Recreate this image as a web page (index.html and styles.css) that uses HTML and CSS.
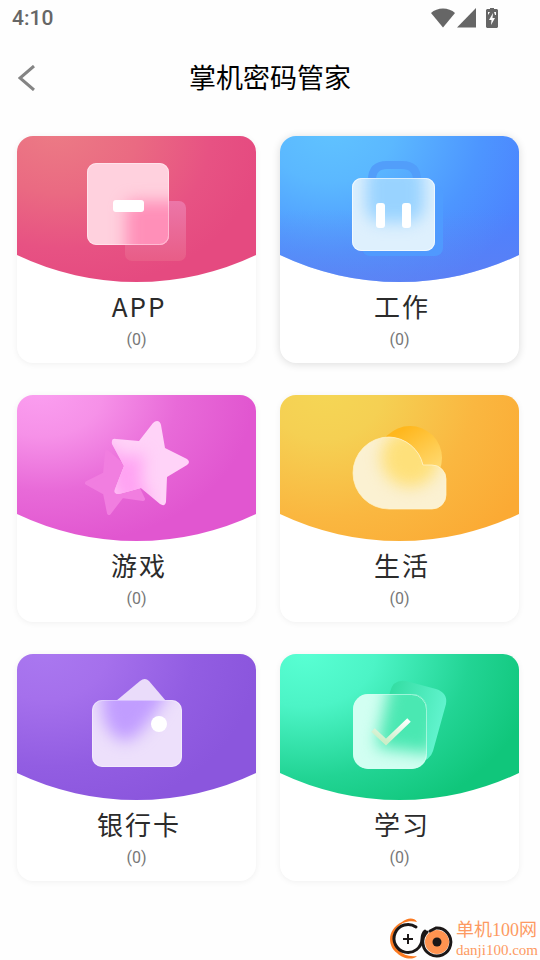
FILE: index.html
```html
<!DOCTYPE html>
<html lang="zh-CN">
<head>
    <meta charset="UTF-8">
    <meta name="viewport" content="width=device-width, initial-scale=1.0">
    <title>掌机密码管家</title>
    <link rel="stylesheet" href="styles.css">
</head>
<body>

    <!-- Status bar -->
    <div class="status-bar">
        <span class="time">4:10</span>
        <div class="status-icons">
            <svg class="icon-wifi" viewBox="0 0 24 20" aria-hidden="true">
                <path d="M0 5C6-1 18-1 24 5L12 19.500z"/>
            </svg>
            <svg class="icon-signal" viewBox="0 0 19 20" aria-hidden="true">
                <path d="M19 0v19.500H0z"/>
            </svg>
            <svg class="icon-battery" viewBox="0 0 12 20" aria-hidden="true">
                <path fill-rule="evenodd" d="M4 0h4v1h3l1 1v17l-1 1H1l-1-1V2l1-1h3zM7 5l-4 7h2.500L5 17l4-7H6.500zM2 4v3l2-3zM8 4h2v3H9z"/>
            </svg>
        </div>
    </div>

    <header class="header">
        <button class="back" type="button" aria-label="返回">
            <svg viewBox="0 0 18 26" aria-hidden="true"><path d="M16 1L2 13l14 12"/></svg>
        </button>
        <h1>掌机密码管家</h1>
    </header>

    <main class="card-grid">
        <a class="card" href="#app">
            <svg class="cover" viewBox="0 0 239 147" aria-hidden="true">
                <defs>
                    <radialGradient id="appBg" gradientUnits="userSpaceOnUse" cx="35" cy="-15" r="210" gradientTransform="rotate(8) scale(1 .75)">
                        <stop offset="0" stop-color="#ec7b85"/>
                        <stop offset=".4" stop-color="#ea6a82"/>
                        <stop offset=".75" stop-color="#e75283"/>
                        <stop offset="1" stop-color="#e54a80"/>
                    </radialGradient>
                    <linearGradient id="appBack" x1="0" y1="0" x2="0" y2="1">
                        <stop offset="0" stop-color="#ec76a8"/>
                        <stop offset="1" stop-color="#e85d87"/>
                    </linearGradient>
                    <clipPath id="appClip"><rect x="70" y="27" width="82" height="82" rx="9"/></clipPath>
                    <filter id="blur" x="-50%" y="-50%" width="200%" height="200%" color-interpolation-filters="sRGB"><feGaussianBlur stdDeviation="8"/></filter>
                </defs>
                <path fill="url(#appBg)" d="M0 0h239v119a278 278 0 0 1-239 0z"/>
                <rect x="108" y="65" width="61" height="60" rx="7" fill="url(#appBack)"/>
                <g clip-path="url(#appClip)">
                    <rect x="70" y="27" width="82" height="82" fill="#ffd1de"/>
                    <rect x="109" y="65" width="65" height="64" rx="7" fill="#ff8fb8" filter="url(#blur)"/>
                </g>
                <rect x="70.500" y="27.500" width="81" height="81" rx="9" fill="none" stroke="#fff" stroke-opacity=".4"/>
                <rect x="96" y="64" width="31" height="12" rx="3" fill="#fff"/>
            </svg>
            <span class="name">APP</span>
            <span class="count">(0)</span>
        </a>

        <a class="card card-active" href="#work">
            <svg class="cover" viewBox="0 0 239 147" aria-hidden="true">
                <defs>
                    <radialGradient id="workBg" gradientUnits="userSpaceOnUse" cx="50" cy="-10" r="215" gradientTransform="scale(1 .85)">
                        <stop offset="0" stop-color="#60c3ff"/>
                        <stop offset=".3" stop-color="#5bb8ff"/>
                        <stop offset=".7" stop-color="#4d96ff"/>
                        <stop offset="1" stop-color="#4c82fe"/>
                    </radialGradient>
                    <linearGradient id="workShade" x1="0" y1="0" x2="0" y2="1">
                        <stop offset=".5" stop-color="#6a7ceb" stop-opacity="0"/>
                        <stop offset="1" stop-color="#6a7ceb" stop-opacity=".5"/>
                    </linearGradient>
                    <clipPath id="workClip"><rect x="72" y="42" width="83" height="73" rx="9"/></clipPath>
                </defs>
                <path fill="url(#workBg)" d="M0 0h239v119a278 278 0 0 1-239 0z"/>
                <path fill="url(#workShade)" d="M0 0h239v119a278 278 0 0 1-239 0z"/>
                <path d="M92 50V44q0-15 15-15h15q15 0 15 15v6" fill="none" stroke="#529efa" stroke-width="8"/>
                <rect x="82" y="50" width="81" height="70" rx="8" fill="#4f9dff" fill-opacity=".8"/>
                <g clip-path="url(#workClip)">
                    <rect x="72" y="42" width="83" height="73" fill="#def0fd"/>
                    <rect x="86" y="28" width="58" height="58" rx="16" fill="#99d3ff" filter="url(#blur)"/>
                </g>
                <rect x="72.500" y="42.500" width="82" height="72" rx="9" fill="none" stroke="#fff" stroke-opacity=".6"/>
                <rect x="96" y="67" width="9" height="25" rx="3" fill="#fff"/>
                <rect x="122" y="67" width="9" height="25" rx="3" fill="#fff"/>
            </svg>
            <span class="name">工作</span>
            <span class="count">(0)</span>
        </a>

        <a class="card" href="#game">
            <svg class="cover" viewBox="0 0 239 147" aria-hidden="true">
                <defs>
                    <radialGradient id="gameBg" gradientUnits="userSpaceOnUse" cx="20" cy="-10" r="215" gradientTransform="rotate(6) scale(1 .72)">
                        <stop offset="0" stop-color="#fb9ff0"/>
                        <stop offset=".3" stop-color="#f691e8"/>
                        <stop offset=".65" stop-color="#e86ad8"/>
                        <stop offset="1" stop-color="#e156d0"/>
                    </radialGradient>
                    <clipPath id="gameClip"><path d="M140 26q3 0 4 4l4 23 22 11q4 3 0 6l-20 12-1 25q-1 5-6 2L124 93l-22 6q-6 0-4-5l9-23-12-22q-1-6 4-5l23 2 14-18q2-2 4-2z"/></clipPath>
                </defs>
                <path fill="url(#gameBg)" d="M0 0h239v119a278 278 0 0 1-239 0z"/>
                <g fill="#f17ee0" stroke="#f17ee0" stroke-width="4" stroke-linejoin="round">
                    <path d="M90 57l15 13 15-4-2 21 8 17-21-3-13 17-4-20-18-10 18-9z"/>
                </g>
                <g clip-path="url(#gameClip)">
                    <rect x="90" y="20" width="86" height="95" fill="#ffd3f8"/>
                    <path d="M90 57l15 13 15-4-2 21 8 17-21-3z" fill="#ffa2f2" stroke="#ffa2f2" stroke-width="12" filter="url(#blur)"/>
                </g>
            </svg>
            <span class="name">游戏</span>
            <span class="count">(0)</span>
        </a>

        <a class="card" href="#life">
            <svg class="cover" viewBox="0 0 239 147" aria-hidden="true">
                <defs>
                    <radialGradient id="lifeBg" gradientUnits="userSpaceOnUse" cx="45" cy="-5" r="230" gradientTransform="scale(1 .85)">
                        <stop offset="0" stop-color="#f5d655"/>
                        <stop offset=".25" stop-color="#f5d053"/>
                        <stop offset=".65" stop-color="#fab740"/>
                        <stop offset="1" stop-color="#fbaa34"/>
                    </radialGradient>
                    <linearGradient id="lifeSun" x1=".3" y1=".1" x2=".8" y2=".9">
                        <stop offset="0" stop-color="#ffb71d"/>
                        <stop offset="1" stop-color="#ffdf7e"/>
                    </linearGradient>
                    <clipPath id="lifeClip"><path d="M109 42a36 36 0 0 1 34 28h9a14 14 0 0 1 14 14v16a14 14 0 0 1-14 14h-43a36 36 0 0 1 0-72z"/></clipPath>
                </defs>
                <path fill="url(#lifeBg)" d="M0 0h239v119a278 278 0 0 1-239 0z"/>
                <circle cx="130" cy="63" r="32" fill="url(#lifeSun)"/>
                <g clip-path="url(#lifeClip)">
                    <rect x="72" y="40" width="96" height="76" fill="#fbf1d2"/>
                    <circle cx="130" cy="63" r="29" fill="#fee07a" filter="url(#blur)"/>
                </g>
                <path d="M109 42a36 36 0 0 1 34 28h9a14 14 0 0 1 14 14v16a14 14 0 0 1-14 14h-43a36 36 0 0 1 0-72z" fill="none" stroke="#fff5cf" stroke-opacity=".7"/>
            </svg>
            <span class="name">生活</span>
            <span class="count">(0)</span>
        </a>

        <a class="card" href="#bank">
            <svg class="cover" viewBox="0 0 239 147" aria-hidden="true">
                <defs>
                    <radialGradient id="bankBg" gradientUnits="userSpaceOnUse" cx="25" cy="-10" r="215" gradientTransform="rotate(6) scale(1 .78)">
                        <stop offset="0" stop-color="#aa78f0"/>
                        <stop offset=".3" stop-color="#a570ec"/>
                        <stop offset=".7" stop-color="#925de2"/>
                        <stop offset="1" stop-color="#8b56dd"/>
                    </radialGradient>
                    <clipPath id="bankClip"><rect x="75" y="46" width="90" height="67" rx="10"/></clipPath>
                </defs>
                <path fill="url(#bankBg)" d="M0 0h239v119a278 278 0 0 1-239 0z"/>
                <path d="M99 47l24-20q5-4 9 0l17 20z" fill="#eadcfa"/>
                <g clip-path="url(#bankClip)">
                    <rect x="75" y="46" width="90" height="67" fill="#ede0fb"/>
                    <path d="M84 30h70l-12 24-20 26-14 8-14-8-8-16z" fill="#c19dff" filter="url(#blur)"/>
                </g>
                <rect x="75.500" y="46.500" width="89" height="66" rx="10" fill="none" stroke="#fff" stroke-opacity=".35"/>
                <circle cx="142" cy="70" r="8" fill="#fff"/>
            </svg>
            <span class="name">银行卡</span>
            <span class="count">(0)</span>
        </a>

        <a class="card" href="#study">
            <svg class="cover" viewBox="0 0 239 147" aria-hidden="true">
                <defs>
                    <radialGradient id="studyBg" gradientUnits="userSpaceOnUse" cx="25" cy="0" r="235" gradientTransform="scale(1 .75)">
                        <stop offset="0" stop-color="#58ffd3"/>
                        <stop offset=".3" stop-color="#4cf4c6"/>
                        <stop offset=".7" stop-color="#22d494"/>
                        <stop offset="1" stop-color="#10c67b"/>
                    </radialGradient>
                    <linearGradient id="studyBack" x1="0" y1=".3" x2="1" y2=".6">
                        <stop offset="0" stop-color="#2bd99b"/>
                        <stop offset="1" stop-color="#66f6d2"/>
                    </linearGradient>
                    <linearGradient id="studyCheck" x1="1" y1="0" x2=".4" y2="1">
                        <stop offset="0" stop-color="#fff"/>
                        <stop offset="1" stop-color="#cdeec8"/>
                    </linearGradient>
                    <clipPath id="studyClip"><rect x="73" y="40" width="74" height="75" rx="15"/></clipPath>
                </defs>
                <path fill="url(#studyBg)" d="M0 0h239v119a278 278 0 0 1-239 0z"/>
                <path d="M110 38q3-13 16-11l30 8q12 4 10 15l-13 47q-3 10-15 11L95 96z" fill="url(#studyBack)"/>
                <g clip-path="url(#studyClip)">
                    <rect x="73" y="40" width="74" height="75" fill="#d2fff2"/>
                    <path d="M114 25l50 10-14 62-50-6z" fill="#4ae8b2" stroke="#4ae8b2" stroke-width="6" filter="url(#blur)"/>
                </g>
                <rect x="73.500" y="40.500" width="73" height="74" rx="15" fill="none" stroke="#d2fff2" stroke-opacity=".6"/>
                <path d="M93 76l13 12 23-22" fill="none" stroke="url(#studyCheck)" stroke-width="5"/>
            </svg>
            <span class="name">学习</span>
            <span class="count">(0)</span>
        </a>
    </main>

    <footer class="site-mark">
        <svg class="mark-logo" viewBox="0 0 64 42" aria-hidden="true">
            <path d="M27 4C24-1 17 0 12 4-3 11-3 28 7 35c5 5 15 8 20 3-8 1-14-1-18-6C0 24 2 11 13 5c5-2 10-2 14-1z" fill="#fb7a21"/>
            <g fill="none" stroke="#1b1717" stroke-width="3" stroke-linecap="round">
                <path d="M26 9A14 14 0 1 0 32 21q0-5 3-8"/>
                <circle cx="47" cy="24" r="12" fill="#ff9350" stroke="none"/>
                <path d="M37 14A14 14 0 1 0 46 10L40 13"/>
            </g>
            <path d="M18 16v10M13 21h10" stroke="#1b1717" stroke-width="2"/>
            <circle cx="47" cy="24" r="4.500" fill="#1b1717"/>
        </svg>
        <div class="mark-text">
            <span class="mark-name">单机100网</span>
            <span class="mark-url">danji100.com</span>
        </div>
    </footer>

</body>
</html>
```

FILE: styles.css
```css
* {
    box-sizing: border-box;
}

body {
    font-family: Roboto, "Noto Sans CJK SC", sans-serif;
    margin: 0;
    min-height: 100vh;
    display: flex;
    flex-direction: column;
    background-color: #fefefe;
}

/* Status bar */
.status-bar {
    display: flex;
    justify-content: space-between;
    align-items: center;
    height: 36px;
    padding: 0 42px 0 12px;
    color: #666;
}

.time {
    font-size: 21px;
    font-weight: 500;
    line-height: 38px;
}

.status-icons {
    display: flex;
    align-items: center;
    gap: 2px;
    height: 34px;
}

.status-icons svg {
    height: 20px;
    fill: #666;
}

.icon-wifi {
    width: 24px;
}

.icon-signal {
    width: 19px;
}

.icon-battery {
    width: 12px;
    margin-left: 8px;
}

/* Title row */
.header {
    display: grid;
    grid-template-columns: 48px 1fr 48px;
    align-items: center;
    height: 84px;
}

.back {
    height: 48px;
    padding: 0 0 0 18px;
    border: none;
    background: none;
    text-align: left;
    cursor: pointer;
}

.back svg {
    display: block;
    width: 18px;
    height: 26px;
    fill: none;
    stroke: #848484;
    stroke-width: 3;
}

.header h1 {
    margin: 0;
    padding-top: 2px;
    font-size: 27px;
    font-weight: 400;
    line-height: 40px;
    text-align: center;
    color: #000;
}

/* Category cards */
.card-grid {
    display: grid;
    grid-template-columns: 1fr 1fr;
    gap: 32px 24px;
    padding: 16px 21px 32px 17px;
}

.card {
    display: flex;
    flex-direction: column;
    align-items: center;
    padding-bottom: 11px;
    border-radius: 16px;
    background-color: #fff;
    box-shadow: 0 1px 6px rgba(0, 0, 0, 0.06);
    color: #2b2b2b;
    text-decoration: none;
    overflow: hidden;
}

.card-active {
    box-shadow: 0 1px 8px rgba(0, 0, 0, 0.14);
}

.cover {
    display: block;
    width: 100%;
}

.name {
    margin-top: 3px;
    padding-left: 5px;
    font-family: "Noto Sans CJK SC", sans-serif;
    font-size: 26px;
    line-height: 40px;
    letter-spacing: 2px;
}

.count {
    margin-top: 2px;
    font-size: 16px;
    line-height: 24px;
    color: #777;
}

/* Site mark */
.site-mark {
    display: flex;
    align-items: center;
    gap: 2px;
    margin-top: auto;
    margin-left: auto;
    padding-right: 2px;
}

.mark-logo {
    width: 64px;
    height: 42px;
}

.mark-text {
    display: flex;
    flex-direction: column;
    font-family: "Liberation Serif", "Noto Sans CJK SC", serif;
    color: #fd9a62;
}

.mark-name {
    font-size: 18px;
    line-height: 22px;
}

.mark-url {
    font-size: 15px;
    line-height: 18px;
}
```
